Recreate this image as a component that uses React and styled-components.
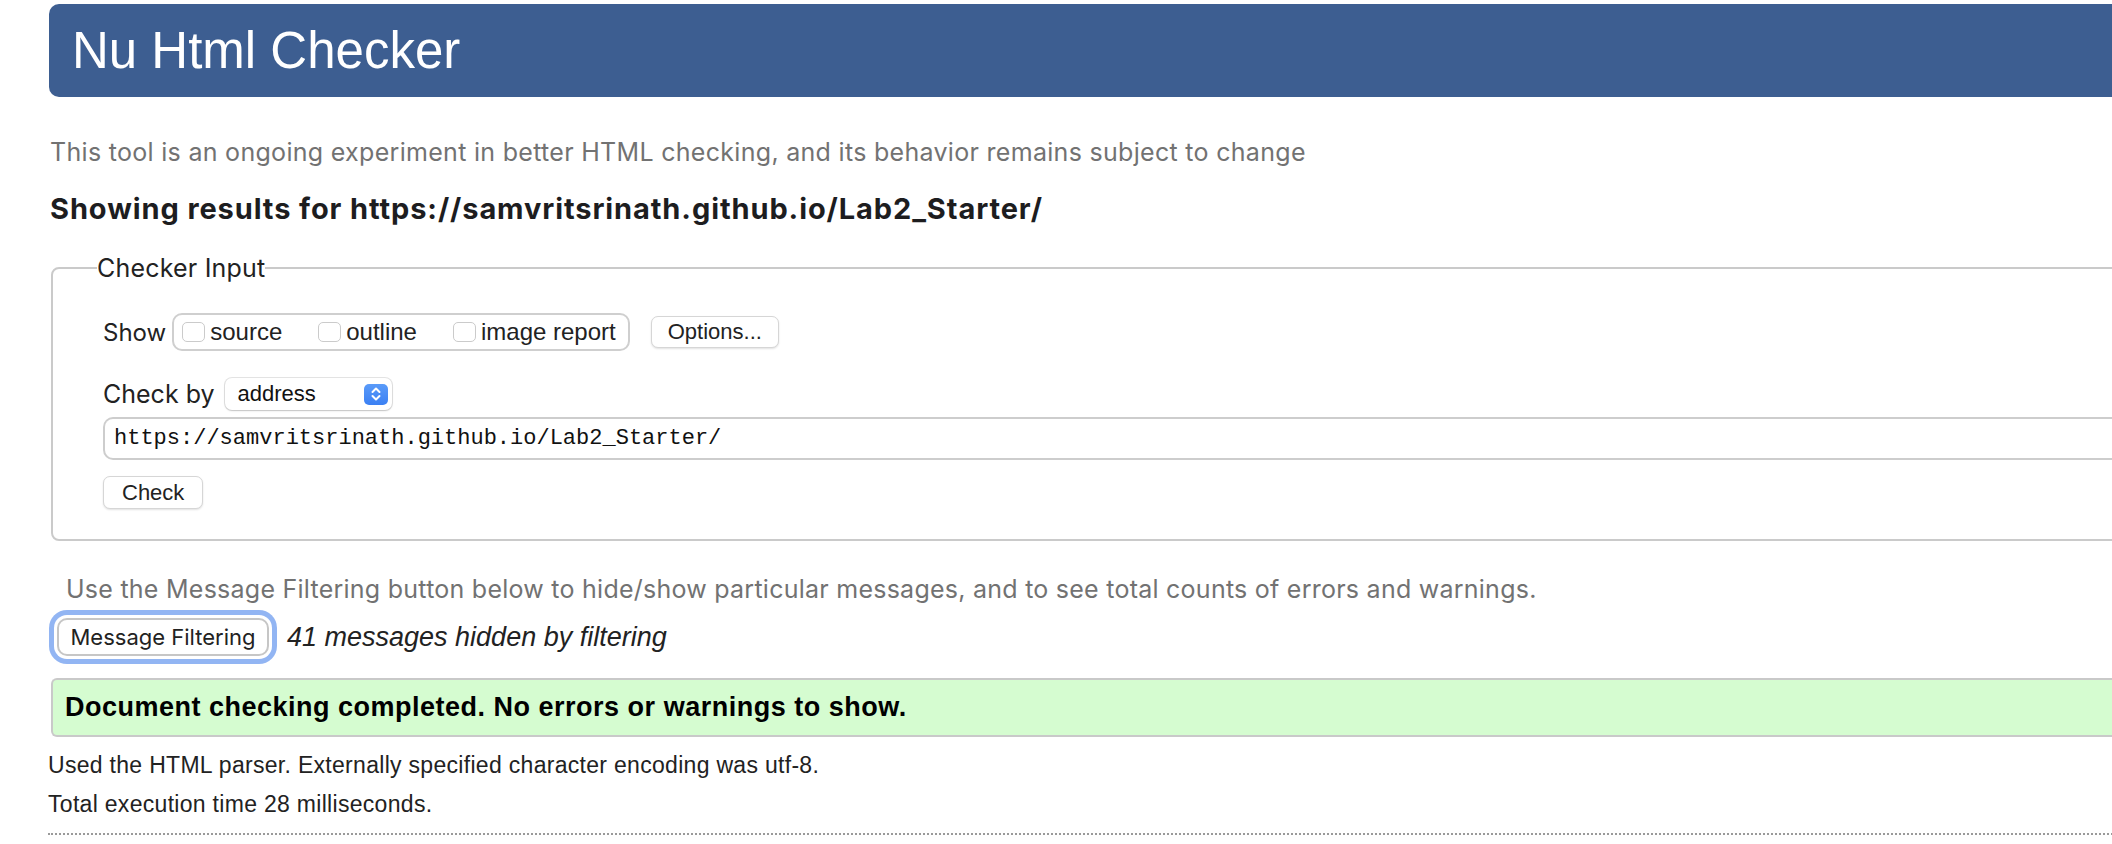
import React from 'react';
import styled, { createGlobalStyle } from 'styled-components';

const GlobalStyle = createGlobalStyle`
  html, body {
    margin: 0;
    padding: 0;
    background: #ffffff;
    overflow: hidden;
  }
  body {
    font-family: "Liberation Sans", Arial, Helvetica, sans-serif;
    color: #222222;
  }
`;

const ui = `Inter, "Liberation Sans", Arial, sans-serif`;

const Page = styled.div`
  width: 2240px;
  padding: 4px 0 0 49px;
  display: flex;
  flex-direction: column;
`;

const TitleBar = styled.h1`
  margin: 0;
  height: 93px;
  display: flex;
  align-items: center;
  padding-left: 23px;
  background: #3d5e91;
  border-radius: 10px 0 0 10px;
  color: #ffffff;
  font-size: 51px;
  font-weight: 400;
`;

const Intro = styled.p`
  margin: 39px 0 0 1px;
  font-family: ${ui};
  font-size: 25px;
  letter-spacing: 0.3px;
  line-height: 32px;
  color: #727272;
`;

const ResultsFor = styled.h2`
  margin: 23px 0 0 1px;
  font-family: ${ui};
  font-size: 29px;
  letter-spacing: 0.9px;
  line-height: 36px;
  font-weight: 700;
  color: #1d1d1f;
`;

const InputBox = styled.fieldset`
  margin: 25px 0 0 2px;
  padding: 0 0 30px 50px;
  border: 2px solid #cacaca;
  border-radius: 8px;
  display: flex;
  flex-direction: column;
  align-items: flex-start;
`;

const Legend = styled.legend`
  padding: 0;
  margin-left: -6px;
  font-family: ${ui};
  font-size: 25px;
  letter-spacing: 0.2px;
  line-height: 32px;
  color: #222222;
`;

const Row = styled.div`
  display: flex;
  align-items: center;
  margin-top: ${p => p.$top}px;
`;

const Label = styled.span`
  font-family: ${ui};
  font-size: ${p => p.$size || 24}px;
  color: #222222;
  margin-right: ${p => p.$gap}px;
`;

const OptionGroup = styled.div`
  display: flex;
  align-items: center;
  gap: 36px;
  height: 34px;
  padding: 0 12px 0 8px;
  border: 2px solid #cfcfcf;
  border-radius: 10px;
`;

const Option = styled.label`
  display: flex;
  align-items: center;
  gap: 5px;
  font-size: 24px;
  color: #222222;
`;

const Tick = styled.input.attrs({ type: 'checkbox' })`
  appearance: none;
  margin: 0;
  width: 23px;
  height: 20px;
  border: 1px solid #cbcbcb;
  border-radius: 5px;
  background: #ffffff;
`;

const PushButton = styled.button`
  height: ${p => p.$height || 32}px;
  padding: 0 ${p => p.$pad}px;
  margin-left: ${p => p.$left || 0}px;
  border: 1px solid #d6d6d6;
  border-radius: 7px;
  background: #ffffff;
  box-shadow: 0 1px 2px rgba(0, 0, 0, 0.12);
  font-family: "Liberation Sans", Arial, sans-serif;
  font-size: 22px;
  color: #222222;
`;

const Select = styled.div`
  width: 167px;
  height: 32px;
  box-sizing: border-box;
  display: flex;
  align-items: center;
  justify-content: space-between;
  padding: 0 4px 0 13px;
  border-radius: 7px;
  background: #ffffff;
  box-shadow: 0 0 0 1px rgba(0, 0, 0, 0.1), 0 1px 2px rgba(0, 0, 0, 0.15);
  font-size: 22px;
  color: #111111;
`;

const Stepper = styled.span`
  width: 24px;
  height: 21px;
  border-radius: 5px;
  background: linear-gradient(#5a9bf9, #3b80f3);
  display: flex;
  align-items: center;
  justify-content: center;
`;

const UrlField = styled.div`
  align-self: stretch;
  height: 39px;
  margin-top: 7px;
  display: flex;
  align-items: center;
  padding-left: 9px;
  border: 2px solid #cdcdcd;
  border-right: none;
  border-radius: 10px 0 0 10px;
  font-family: "Liberation Mono", "DejaVu Sans Mono", monospace;
  font-size: 22px;
  color: #111111;
`;

const FilterNote = styled.p`
  margin: 32px 0 0 17px;
  font-family: ${ui};
  font-size: 25px;
  letter-spacing: 0.25px;
  line-height: 32px;
  color: #727272;
`;

const FilterRow = styled.div`
  display: flex;
  align-items: center;
  margin: 13px 0 0 8px;
`;

const FocusButton = styled.button`
  height: 38px;
  width: 212px;
  border: 2px solid #c6c6c6;
  border-radius: 10px;
  background: #ffffff;
  box-shadow: 0 0 0 3px #ffffff, 0 0 0 8px #92b5f3;
  font-family: ${ui};
  font-size: 22px;
  color: #222222;
`;

const HiddenCount = styled.em`
  margin-left: 18px;
  font-size: 27px;
  color: #222222;
`;

const Success = styled.div`
  margin: 22px 0 0 2px;
  height: 55px;
  display: flex;
  align-items: center;
  padding-left: 12px;
  background: #d5fcd0;
  border: 2px solid #c9c9c9;
  border-right: none;
  border-radius: 6px 0 0 6px;
  font-size: 27px;
  letter-spacing: 0.5px;
  font-weight: 700;
  color: #000000;
`;

const Detail = styled.p`
  margin: ${p => p.$top}px 0 0 -1px;
  font-size: 23px;
  letter-spacing: 0.3px;
  line-height: 28px;
  color: #222222;
`;

const Rule = styled.hr`
  margin: 15px 0 0 -1px;
  border: none;
  border-top: 2px dotted #9a9a9a;
`;

function Chevrons() {
  return (
    <svg width="12" height="16" viewBox="0 0 12 16" fill="none" stroke="#ffffff" strokeWidth="2" strokeLinecap="round" strokeLinejoin="round">
      <path d="M2.5 6 L6 2.5 L9.5 6" />
      <path d="M2.5 10 L6 13.5 L9.5 10" />
    </svg>
  );
}

export default function App() {
  return (
    <>
      <GlobalStyle />
      <Page>
        <TitleBar>Nu Html Checker</TitleBar>
        <Intro>This tool is an ongoing experiment in better HTML checking, and its behavior remains subject to change</Intro>
        <ResultsFor>Showing results for https://samvritsrinath.github.io/Lab2_Starter/</ResultsFor>

        <InputBox>
          <Legend>Checker Input</Legend>
          <Row $top={29}>
            <Label $gap={6}>Show</Label>
            <OptionGroup>
              <Option><Tick />source</Option>
              <Option><Tick />outline</Option>
              <Option><Tick />image report</Option>
            </OptionGroup>
            <PushButton $pad={16} $left={21}>Options...</PushButton>
          </Row>
          <Row $top={27}>
            <Label $gap={10} $size={25}>Check by</Label>
            <Select>
              address
              <Stepper><Chevrons /></Stepper>
            </Select>
          </Row>
          <UrlField>https://samvritsrinath.github.io/Lab2_Starter/</UrlField>
          <Row $top={16}>
            <PushButton $pad={18} $height={33}>Check</PushButton>
          </Row>
        </InputBox>

        <FilterNote>Use the Message Filtering button below to hide/show particular messages, and to see total counts of errors and warnings.</FilterNote>
        <FilterRow>
          <FocusButton>Message Filtering</FocusButton>
          <HiddenCount>41 messages hidden by filtering</HiddenCount>
        </FilterRow>

        <Success>Document checking completed. No errors or warnings to show.</Success>
        <Detail $top={14}>Used the HTML parser. Externally specified character encoding was utf-8.</Detail>
        <Detail $top={11}>Total execution time 28 milliseconds.</Detail>
        <Rule />
      </Page>
    </>
  );
}
